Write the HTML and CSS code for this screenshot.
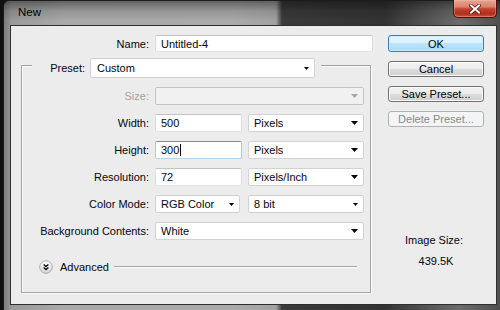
FILE: index.html
```html
<!DOCTYPE html>
<html>
<head>
<meta charset="utf-8">
<link rel="stylesheet" href="styles.css">
</head>
<body>
<div class="screen">
  <div class="window">
    <div class="titlebar">
      <span class="title">New</span>
      <div class="close">
        <svg width="12" height="10" viewBox="0 0 12 10"><path d="M2 1.5L10 8.5M10 1.5L2 8.5" stroke="#5a1a10" stroke-width="3.6" stroke-linecap="square"/><path d="M2 1.5L10 8.5M10 1.5L2 8.5" stroke="#fff" stroke-width="2" stroke-linecap="square"/></svg>
      </div>
    </div>
    <div class="client">
      <div class="main">
        <div class="row name-row">
          <span class="lbl">Name:</span>
          <div class="field input w-name">Untitled-4</div>
        </div>
        <div class="group">
          <div class="legend">
            <span class="legend-lbl">Preset:</span>
            <div class="field combo w-preset"><span>Custom</span><svg class="arr" width="5" height="3" viewBox="0 0 5 3"><path d="M0 0h5L2.5 3z" fill="#000"/></svg></div>
          </div>
          <div class="rows">
            <div class="row">
              <span class="lbl off">Size:</span>
              <div class="field combo disabled w-full"><span></span><svg class="arr" width="7" height="4" viewBox="0 0 7 4"><path d="M0 0h7L3.5 4z" fill="#a6a6a6"/></svg></div>
            </div>
            <div class="row">
              <span class="lbl">Width:</span>
              <div class="field input w-num">500</div>
              <div class="field combo w-unit"><span>Pixels</span><svg class="arr" width="7" height="4" viewBox="0 0 7 4"><path d="M0 0h7L3.5 4z" fill="#000"/></svg></div>
            </div>
            <div class="row">
              <span class="lbl">Height:</span>
              <div class="field input focus w-num">300<span class="caret"></span></div>
              <div class="field combo w-unit"><span>Pixels</span><svg class="arr" width="7" height="4" viewBox="0 0 7 4"><path d="M0 0h7L3.5 4z" fill="#000"/></svg></div>
            </div>
            <div class="row">
              <span class="lbl">Resolution:</span>
              <div class="field input w-num">72</div>
              <div class="field combo w-unit"><span>Pixels/Inch</span><svg class="arr" width="7" height="4" viewBox="0 0 7 4"><path d="M0 0h7L3.5 4z" fill="#000"/></svg></div>
            </div>
            <div class="row">
              <span class="lbl">Color Mode:</span>
              <div class="field combo w-mode"><span>RGB Color</span><svg class="arr" width="5" height="3" viewBox="0 0 5 3"><path d="M0 0h5L2.5 3z" fill="#000"/></svg></div>
              <div class="field combo w-bit"><span>8 bit</span><svg class="arr" width="5" height="3" viewBox="0 0 5 3"><path d="M0 0h5L2.5 3z" fill="#000"/></svg></div>
            </div>
            <div class="row">
              <span class="lbl">Background Contents:</span>
              <div class="field combo w-full"><span>White</span><svg class="arr" width="7" height="4" viewBox="0 0 7 4"><path d="M0 0h7L3.5 4z" fill="#000"/></svg></div>
            </div>
          </div>
          <div class="advanced">
            <svg class="adv-icon" width="14" height="14" viewBox="0 0 14 14">
              <defs><linearGradient id="g" x1="0" y1="0" x2="0" y2="1"><stop offset="0" stop-color="#ffffff"/><stop offset="1" stop-color="#d6d6d6"/></linearGradient></defs>
              <circle cx="7" cy="7" r="6.3" fill="url(#g)" stroke="#a9a9a9"/>
              <path d="M4.6 4.4L7 6.6L9.4 4.4M4.6 7.4L7 9.6L9.4 7.4" fill="none" stroke="#111" stroke-width="1.3"/>
            </svg>
            <span class="adv-text">Advanced</span>
            <span class="adv-line"></span>
          </div>
        </div>
      </div>
      <div class="side">
        <div class="btn default">OK</div>
        <div class="btn">Cancel</div>
        <div class="btn">Save Preset...</div>
        <div class="btn disabled">Delete Preset...</div>
        <div class="imgsize">
          <div class="imgsize-lbl">Image Size:</div>
          <div class="imgsize-val">439.5K</div>
        </div>
      </div>
    </div>
  </div>
</div>
</body>
</html>
```

FILE: styles.css
```css
html, body {
  margin: 0;
  padding: 0;
  background: #0f0f0f;
}
body {
  font-family: "Liberation Sans", Arial, sans-serif;
  font-size: 11px;
  color: #05050f;
}
.screen {
  width: 500px;
  height: 310px;
  overflow: hidden;
  padding-left: 3px;
  box-sizing: border-box;
  background: #101010;
}
.window {
  width: 510px;
  height: 320px;
  border: 1px solid #1c1c1c;
  border-right: none;
  border-bottom: none;
  border-radius: 6px 0 0 0;
  padding-left: 6px;
  box-sizing: border-box;
  background:
    linear-gradient(to bottom, rgba(0,0,0,0.42) 0, rgba(0,0,0,0.12) 10px, rgba(0,0,0,0) 20px),
    linear-gradient(to right, #7c7c7c 0, #9a9a9a 8px, #a9a9a9 60px, #aaaaaa 230px, #a2a2a2 272px, #3a3a3a 278px, #333333 380px, #5a5a5a 430px, #6c6c6c 455px, #4c4c4c 500px);
}
.titlebar {
  height: 24px;
  display: flex;
  align-items: center;
  padding-left: 8px;
  padding-right: 16px;
}
.title {
  font-size: 11.5px;
  line-height: 13px;
  color: #000;
  margin-top: -1px;
}
.close {
  margin-left: auto;
  align-self: flex-start;
  margin-top: -1px;
  width: 44px;
  height: 18px;
  box-sizing: border-box;
  border: 1px solid #4a1208;
  border-top: none;
  border-radius: 0 0 5px 5px;
  background: linear-gradient(to bottom, #e6a595 0, #d98470 40%, #c4432c 52%, #b0301d 80%, #c8563a 100%);
  box-shadow: inset 0 0 0 1px rgba(255,200,180,0.35);
  display: flex;
  align-items: center;
  justify-content: center;
}
.client {
  width: 487px;
  height: 280px;
  box-sizing: border-box;
  border: 1px solid #2e2e2e;
  background: #ececec;
  display: flex;
}
.main {
  width: 362px;
  padding-left: 10px;
  box-sizing: border-box;
}
.row {
  display: flex;
  align-items: center;
  height: 18px;
}
.name-row {
  margin-top: 9px;
  height: 17px;
}
.name-row .lbl {
  width: 128px;
}
.lbl {
  width: 127px;
  text-align: right;
  white-space: nowrap;
  margin-right: 6px;
}
.lbl.off {
  color: #a3a3a3;
}
.field {
  height: 100%;
  box-sizing: border-box;
  background: #fff;
  display: flex;
  align-items: center;
  white-space: nowrap;
}
.input {
  border: 1px solid;
  border-color: #c3c3c3 #dedede #e4e4e4 #dedede;
  border-radius: 2px;
  padding-left: 5px;
}
.input.focus {
  border-color: #5d93c4 #a9c9e4 #b7d3ea #a9c9e4;
}
.caret {
  display: inline-block;
  width: 1px;
  height: 12px;
  background: #000;
  margin-left: 1px;
}
.combo {
  border: 1px solid #d2d2d2;
  border-radius: 2px;
  padding-left: 5px;
  padding-right: 5px;
  justify-content: space-between;
}
.combo.disabled {
  background: #f1f1f1;
  border-color: #c4c4c4;
}
.arr {
  display: block;
  flex: none;
}
.w-name { width: 218px; }
.w-full { width: 209px; }
.w-num { width: 87px; }
.w-unit { width: 116px; margin-left: 6px; }
.w-mode { width: 85px; }
.w-bit { width: 116px; margin-left: 8px; }
.w-preset { width: 225px; height: 20px; padding-left: 6px; }

.group {
  margin-top: 13px;
  width: 350px;
  height: 228px;
  box-sizing: border-box;
  border: 1px solid #a3a3a3;
  box-shadow: 1px 1px 0 #fbfbfb, inset 1px 1px 0 #fbfbfb;
}
.legend {
  margin-top: -8px;
  margin-left: 10px;
  height: 20px;
  width: fit-content;
  display: flex;
  align-items: center;
  background: #ececec;
  padding-right: 6px;
}
.legend-lbl {
  width: 58px;
  box-sizing: border-box;
  text-align: right;
  padding-right: 5px;
}
.rows {
  margin-top: 9px;
  display: flex;
  flex-direction: column;
  gap: 9px;
}
.advanced {
  margin-top: 20px;
  height: 13px;
  padding-left: 17px;
  padding-right: 13px;
  display: flex;
  align-items: center;
}
.adv-icon {
  display: block;
  flex: none;
}
.adv-text {
  margin-left: 7px;
}
.adv-line {
  flex: 1;
  height: 1px;
  margin-left: 5px;
  background: #a6a6a6;
  box-shadow: 0 1px 0 #fafafa;
}
.side {
  margin-left: 15px;
  width: 96px;
  padding-top: 9px;
  display: flex;
  flex-direction: column;
  gap: 9px;
}
.btn {
  height: 16px;
  box-sizing: border-box;
  border: 1px solid #707070;
  border-radius: 3px;
  background: linear-gradient(to bottom, #f3f3f3 0, #ebebeb 50%, #dddddd 50%, #cfcfcf 100%);
  box-shadow: inset 0 0 0 1px #fbfbfb;
  display: flex;
  align-items: center;
  justify-content: center;
  color: #000;
  line-height: 12px;
}
.btn.default {
  height: 17px;
  border-color: #3c7fb1;
  background: linear-gradient(to bottom, #eaf6fd 0, #d9f0fc 50%, #bee6fd 50%, #a7d9f5 100%);
  box-shadow: inset 0 0 0 1px #c8ecfc;
}
.btn.disabled {
  border-color: #adb2b5;
  background: #f4f4f4;
  box-shadow: none;
  color: #8a8a8a;
}
.imgsize {
  margin-top: 98px;
  text-align: center;
  line-height: 13px;
}
.imgsize-lbl {
  margin-right: 4px;
}
.imgsize-val {
  margin-top: 8px;
}
```
